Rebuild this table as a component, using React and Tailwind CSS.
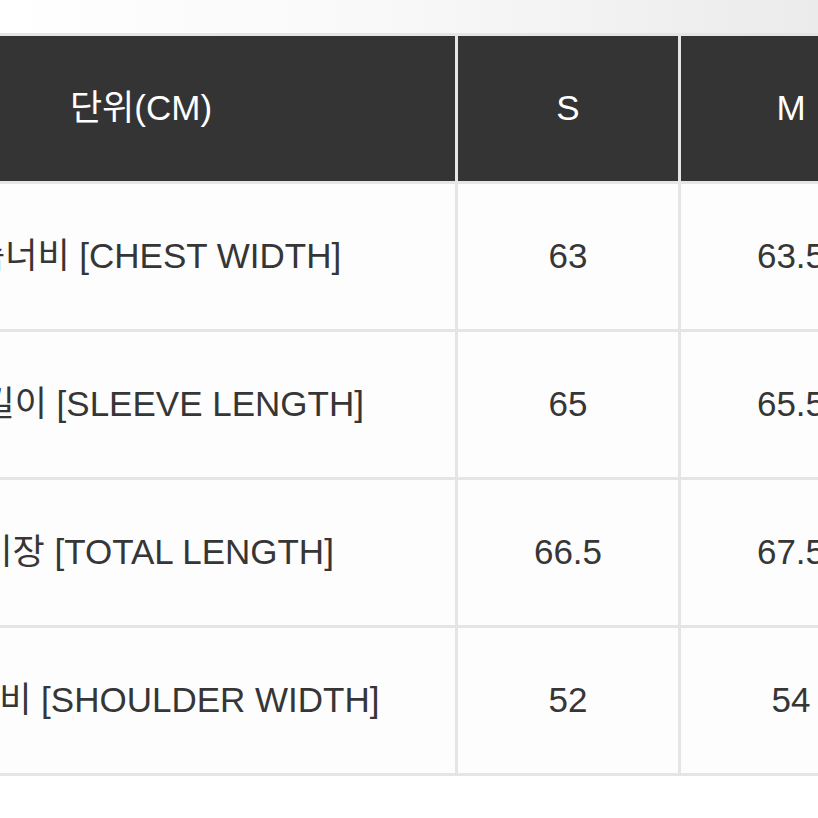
import React from "react";

const sizes = ["S", "M"];

const rows = [
  { label: "가슴너비 [CHEST WIDTH]", values: ["63", "63.5"] },
  { label: "소매길이 [SLEEVE LENGTH]", values: ["65", "65.5"] },
  { label: "총기장 [TOTAL LENGTH]", values: ["66.5", "67.5"] },
  { label: "어깨너비 [SHOULDER WIDTH]", values: ["52", "54"] },
];

const font = { fontFamily: '"Liberation Sans", "Noto Sans CJK KR", sans-serif' };

const App = () => {
  return (
    <div className="w-[818px] h-[818px] overflow-hidden bg-white" style={font}>
      <div className="h-[33px] bg-gradient-to-r from-white via-[#f8f8f8] to-[#ebebeb]"></div>

      <div className="ml-[-176px] w-[1080px] p-[3px] bg-[#e5e5e5] grid grid-cols-[628px_220px_220px] gap-[3px]">
        <div className="h-[145px] bg-[#343434] text-white text-[35px] flex items-center justify-center">
          단위(CM)
        </div>
        {sizes.map((s) => (
          <div key={s} className="h-[145px] bg-[#343434] text-white text-[35px] flex items-center justify-center">
            {s}
          </div>
        ))}

        {rows.map((row) => (
          <React.Fragment key={row.label}>
            <div className="h-[145px] bg-[#fdfdfd] text-[#363636] text-[35px] flex items-center justify-center whitespace-nowrap">
              {row.label}
            </div>
            {row.values.map((v, i) => (
              <div key={i} className="h-[145px] bg-[#fdfdfd] text-[#363636] text-[35px] flex items-center justify-center">
                {v}
              </div>
            ))}
          </React.Fragment>
        ))}
      </div>
    </div>
  );
};

export default App;
